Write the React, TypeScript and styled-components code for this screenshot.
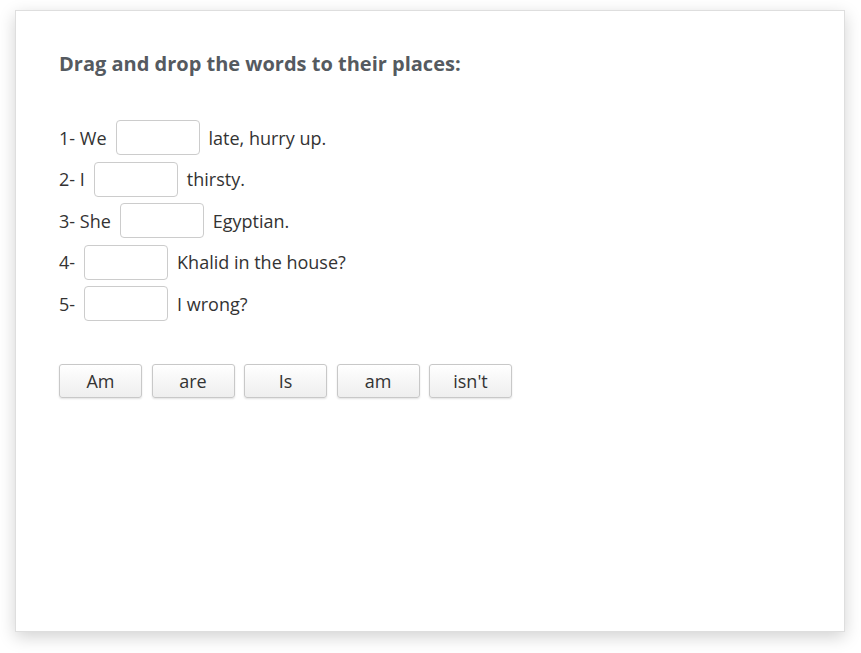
import styled, { createGlobalStyle } from "styled-components";

const GlobalStyle = createGlobalStyle`
    body {
        margin: 0;
        min-height: 100vh;
        background: #fff;
        font-family: "Open Sans", "Liberation Sans", sans-serif;
    }
`;

const Page = styled.div`
    padding: 10px 16px 21px 15px;
`;

const Card = styled.div`
    box-sizing: border-box;
    width: 830px;
    height: 622px;
    padding: 40px 43px;
    background: #fff;
    border: 1px solid #dedede;
    box-shadow: 0 5px 16px rgba(0, 0, 0, 0.18);
`;

const Title = styled.h2`
    margin: 0 0 43px;
    font-size: 20px;
    font-weight: 700;
    line-height: 26px;
    color: #555a60;
`;

const Sentences = styled.div`
    display: flex;
    flex-direction: column;
    gap: 6.5px;
`;

const Row = styled.div`
    display: flex;
    align-items: center;
    gap: 9px;
    height: 35px;
    font-size: 18px;
    color: #333;
`;

const DropBox = styled.span`
    box-sizing: border-box;
    display: inline-block;
    width: 84px;
    height: 35px;
    border: 1px solid #ccc;
    border-radius: 4px;
    background: #fff;
`;

const WordBank = styled.div`
    display: flex;
    gap: 9.5px;
    margin-top: 43px;
`;

const Word = styled.button`
    box-sizing: border-box;
    width: 83px;
    height: 34px;
    padding: 0;
    font-family: inherit;
    font-size: 18px;
    color: #333;
    border: 1px solid #c8c8c8;
    border-radius: 3px;
    background: linear-gradient(#ffffff, #eeeeee);
    box-shadow: 0 1px 2px rgba(0, 0, 0, 0.12);
    cursor: move;
`;

const sentences = [
    { before: "1- We", after: "late, hurry up." },
    { before: "2- I", after: "thirsty." },
    { before: "3- She", after: "Egyptian." },
    { before: "4-", after: "Khalid in the house?" },
    { before: "5-", after: "I wrong?" },
];

const words = ["Am", "are", "Is", "am", "isn't"];

function App() {
    return (
        <Page>
            <GlobalStyle />
            <Card>
                <Title>Drag and drop the words to their places:</Title>
                <Sentences>
                    {sentences.map((s) => (
                        <Row key={s.before}>
                            <span>{s.before}</span>
                            <DropBox />
                            <span>{s.after}</span>
                        </Row>
                    ))}
                </Sentences>
                <WordBank>
                    {words.map((w, i) => (
                        <Word key={i} type="button">{w}</Word>
                    ))}
                </WordBank>
            </Card>
        </Page>
    );
}

export default App;
